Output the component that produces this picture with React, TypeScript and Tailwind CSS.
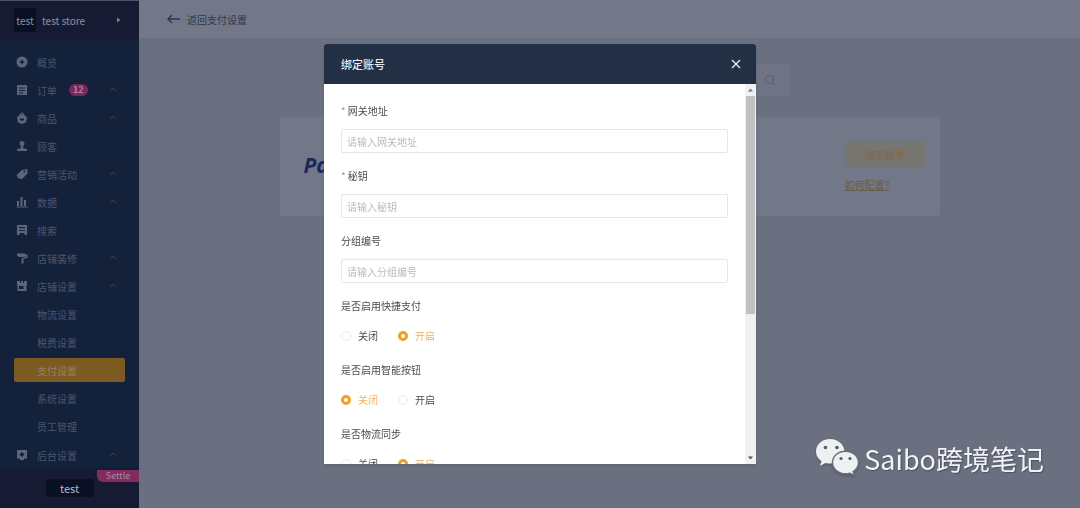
import { useState, type ReactNode } from "react";

const strokeProps = { fill: "none", stroke: "currentColor", strokeWidth: 2 };

const icons: Record<string, ReactNode> = {
  overview: <path fillRule="evenodd" d="M6 .5a5.500 5.500 0 1 0 0 11 5.500 5.500 0 0 0 0-11Zm0 2.700 .9 1.900 1.900.9-1.900.9L6 8.800l-.9-1.900L3.200 6l1.900-.9Z" />,
  order: <path fillRule="evenodd" d="M1 1h10v10H1ZM3 3.500v1h6v-1ZM3 6v1h6V6ZM3 8.500v1h4v-1Z" />,
  product: <path fillRule="evenodd" d="M4 2.500C4 .3 8 .3 8 2.500l3 3-1 5L6 12l-4-1.500-1-5ZM5 2.500h2C7 1.500 5 1.500 5 2.500ZM4 6v2l2 1 2-1V6L6 7Z" />,
  customer: <path d="M6 1a2.500 2.500 0 0 1 1.500 4.500L7 8l4 1.200V11H1V9.200L5 8l-.5-2.500A2.500 2.500 0 0 1 6 1Z" />,
  marketing: <path fillRule="evenodd" d="M.5 7 6 2l5.500-1v4.500L6 11 2.500 10.500ZM8.500 2.600a.9.9 0 1 0 0 1.800.9.9 0 0 0 0-1.800Z" />,
  data: <path d="M1 5h2v5H1Zm3.500-4h2v9h-2ZM8 4h2v6H8ZM.5 10.500h11v1H.5Z" />,
  search: <path fillRule="evenodd" d="M1 1h10v10H9L8 9H4l-1 2H1ZM3 3v1.200h6V3Zm0 3v1h6V6Z" />,
  design: <path d="M1 1.500h8v1h2.500v3.200L7.500 7v4.500h-2V6.500L9.800 5V4H9v1H3L1 3.500Z" />,
  store: <path fillRule="evenodd" d="M1 1h10v3.500l-.5 1V11h-9V5.500l-.5-1ZM3 6v3h4.500V6ZM4 1v2h1V1Zm3 0v2h1V1Z" />,
  admin: <path fillRule="evenodd" d="M1 1h10v8.500H8V11H4V9.500H1ZM6 3 3.500 5.500 6 8l2.500-2.500Z" />,
};

type Item = { icon: string; label: string; badge?: number; expandable?: boolean };

const items: Item[] = [
  { icon: "overview", label: "概览" },
  { icon: "order", label: "订单", badge: 12, expandable: true },
  { icon: "product", label: "商品", expandable: true },
  { icon: "customer", label: "顾客" },
  { icon: "marketing", label: "营销活动", expandable: true },
  { icon: "data", label: "数据", expandable: true },
  { icon: "search", label: "搜索" },
  { icon: "design", label: "店铺装修", expandable: true },
  { icon: "store", label: "店铺设置", expandable: true },
];

const subItems = ["物流设置", "税费设置", "支付设置", "系统设置", "员工管理"];

function NavRow({ icon, label, badge, expandable }: Item) {
  return (
    <a href="#" className="flex h-7 items-center pl-4 pr-[22px]">
      <svg viewBox="0 0 12 12" className="size-3 shrink-0 fill-[#5c657c]" aria-hidden="true">
        {icons[icon]}
      </svg>
      <span className="ml-[9px]">{label}</span>
      {badge && (
        <span className="ml-3 rounded-full bg-[#82245c] px-1 text-[9px] leading-[12px] font-bold text-[#a48aa8]">{badge}</span>
      )}
      {expandable && (
        <svg viewBox="0 0 8 8" className="ml-auto size-2 text-[#35425a]" aria-hidden="true">
          <path d="M1 4.500 4 2.500l3 2" {...strokeProps} strokeWidth={1} />
        </svg>
      )}
    </a>
  );
}

function Sidebar() {
  return (
    <aside className="flex w-[139px] shrink-0 flex-col border-t border-[#4d5268] bg-[#14213a] text-[10px] text-[#4a566e]">
      <div className="flex h-[38px] items-center bg-[#171a33] pl-[14px] pr-4 text-[#8d92a3]">
        <span className="flex h-6 w-[22px] items-center justify-center bg-[#0a1024]">test</span>
        <span className="ml-[6px]">test store</span>
        <svg viewBox="0 0 8 8" className="ml-auto size-2 fill-[#777d91]" aria-hidden="true">
          <path d="m2 1.500 3.500 2.500L2 6.500Z" />
        </svg>
      </div>
      <nav className="flex flex-col pt-[9px]">
        {items.map((item) => (
          <NavRow key={item.icon} {...item} />
        ))}
        {subItems.map((label) => (
          <a
            key={label}
            href="#"
            className={
              label === "支付设置"
                ? "mx-[14px] my-[2px] flex h-6 items-center rounded-[2px] bg-[#7b5b22] pl-[23px] text-[#978160]"
                : "flex h-7 items-center pl-[37px]"
            }
          >
            {label}
          </a>
        ))}
        <div className="flex h-7 flex-col pt-[2px]">
          <NavRow icon="admin" label="后台设置" expandable />
        </div>
      </nav>
      <div className="relative mt-auto flex h-10 items-center justify-center bg-[#171a33]">
        <button type="button" className="h-[18px] w-12 rounded-[2px] bg-[#0a1024] text-[11px] leading-[18px] text-[#b4b8c4]">
          test
        </button>
        <span className="absolute top-[2px] right-0 h-3 w-[42px] rounded-bl-md bg-[#822b5e] text-center text-[9px] leading-[12px] text-[#aa8ba9]">
          Settle
        </span>
      </div>
    </aside>
  );
}

function Page() {
  return (
    <div className="flex min-w-0 grow flex-col bg-[#6b7080]">
      <header className="flex h-[38px] items-center bg-[#737888] pl-7 text-[10px] text-[#30364a]">
        <a href="#" className="flex items-center gap-[7px]">
          <svg viewBox="0 0 13 10" className="h-[10px] w-[13px]" aria-hidden="true">
            <path d="M5 1 1 5l4 4M1 5h12" {...strokeProps} strokeWidth={1.300} />
          </svg>
          返回支付设置
        </a>
      </header>
      <main className="mx-auto w-full max-w-[660px] pt-[26px]">
        <div className="mr-[150px] ml-auto flex h-8 w-24 items-center justify-end bg-[#6f7485] pr-[14px]">
          <svg viewBox="0 0 12 12" className="size-3 text-[#5c6175]" aria-hidden="true">
            <path d="M8.500 8.500 11 11M5.500 1.500a4 4 0 1 1 0 8 4 4 0 0 1 0-8Z" {...strokeProps} strokeWidth={1.200} />
          </svg>
        </div>
        <section className="mt-[21px] flex h-[99px] items-center justify-between rounded-[3px] bg-[#737888] pr-[15px] pl-6">
          <span className="pb-1 font-['Open_Sans',sans-serif] text-[21px] leading-7 font-bold text-[#1b2859] italic">PayPal</span>
          <div className="flex w-20 flex-col items-start text-[10px] text-[#665e4b]">
            <button type="button" className="h-[26px] w-full rounded-[2px] bg-[#77756f] text-[#80684d]">
              绑定账号
            </button>
            <a href="#" className="mt-[10px] leading-[14px] underline">
              如何配置?
            </a>
          </div>
        </section>
      </main>
    </div>
  );
}

function TextField({ id, label, required }: { id: string; label: string; required?: boolean }) {
  return (
    <div className="mb-[13px] flex flex-col gap-2">
      <label htmlFor={id} className="leading-5">
        {required && <span className="mr-[2px] text-[#ad8f92]">*</span>}
        {label}
      </label>
      <input
        id={id}
        type="text"
        placeholder={`请输入${label}`}
        className="h-6 w-full rounded-[2px] border border-[#e6e6e8] px-[5px] outline-none placeholder:text-[#b9babf]"
      />
    </div>
  );
}

function RadioField({ name, label, initial }: { name: string; label: string; initial: string }) {
  const [value, setValue] = useState(initial);
  return (
    <fieldset className="mb-3">
      <legend className="leading-5">{label}</legend>
      <div className="mt-[7px] flex h-[25px] items-center gap-5">
        {["关闭", "开启"].map((option) => (
          <label key={option} className="flex items-center gap-[7px] leading-4 has-checked:text-[#f0b35a]">
            <input
              type="radio"
              name={name}
              checked={value === option}
              onChange={() => setValue(option)}
              className="size-[10px] appearance-none rounded-full border border-[#e9e9ec] bg-white checked:border-[3px] checked:border-[#f09f25]"
            />
            {option}
          </label>
        ))}
      </div>
    </fieldset>
  );
}

function BindDialog() {
  return (
    <div className="fixed inset-0 flex items-start justify-center pt-11 pb-11">
      <div role="dialog" aria-labelledby="dialog-title" className="flex h-full w-full max-w-[432px] flex-col overflow-hidden rounded-t-[2px] bg-white shadow-sm">
        <div className="flex h-10 shrink-0 items-center justify-between bg-[#222f45] pr-[15px] pl-[17px] text-[#e7eaf0]">
          <h2 id="dialog-title" className="text-[11px] font-medium">
            绑定账号
          </h2>
          <button type="button" aria-label="关闭">
            <svg viewBox="0 0 10 10" className="size-[10px]" aria-hidden="true">
              <path d="m1 1 8 8M9 1 1 9" {...strokeProps} strokeWidth={1.400} />
            </svg>
          </button>
        </div>
        <div className="flex min-h-0 grow">
          <form className="grow overflow-hidden px-[17px] pt-[17px] text-[10px] text-[#4b4c50]">
            <TextField id="gateway" label="网关地址" required />
            <TextField id="secret" label="秘钥" required />
            <TextField id="group" label="分组编号" />
            <RadioField name="express" label="是否启用快捷支付" initial="开启" />
            <RadioField name="smart" label="是否启用智能按钮" initial="关闭" />
            <RadioField name="logistics" label="是否物流同步" initial="开启" />
          </form>
          <div className="flex w-[11px] shrink-0 flex-col bg-[#f1f1f3]" aria-hidden="true">
            <svg viewBox="0 0 11 12" className="h-3 w-[11px] fill-[#77777c]">
              <path d="m3 7.500 2.500-3 2.500 3Z" />
            </svg>
            <div className="mx-px h-3/5 max-h-[218px] bg-[#c1c1c3]" />
            <svg viewBox="0 0 11 12" className="mt-auto h-3 w-[11px] fill-[#505055]">
              <path d="m3 4.500 2.500 3 2.500-3Z" />
            </svg>
          </div>
        </div>
      </div>
    </div>
  );
}

function Watermark() {
  return (
    <div className="fixed right-9 bottom-7 flex items-start gap-[5px] text-[#f2f3f5]">
      <svg viewBox="0 0 44 38" className="h-[38px] w-11 drop-shadow-[0_1px_1px_#4c5060]" aria-hidden="true">
        <path fill="#eef0f2" d="M15 1C7 1 1 6.500 1 13.500c0 4 2 7.500 5.500 9.700L5 28l5.500-3c1.500.5 3 .6 4.500.6 8 0 14.500-5.400 14.500-12.100S23 1 15 1Z" />
        <path fill="#eef0f2" stroke="#6b7080" strokeWidth="1.500" d="M30.500 13.200c-7.300 0-13 5-13 11.300s5.700 11.300 13 11.300c1.500 0 3-.2 4.300-.6l4.700 2.300-1.300-4c3.400-2.100 5.300-5.300 5.300-9 0-6.300-5.700-11.300-13-11.300Z" />
        <g fill="#555b6b">
          <circle cx="10.500" cy="9.500" r="1.800" />
          <circle cx="22" cy="9.500" r="1.800" />
          <circle cx="26" cy="20.500" r="1.600" />
          <circle cx="35" cy="20.500" r="1.600" />
        </g>
      </svg>
      <span className="text-[27px] leading-[42px] text-shadow-[1px_1px_1px_#4c5060]">Saibo跨境笔记</span>
    </div>
  );
}

export default function App() {
  return (
    <div className="flex min-h-screen font-['Noto_Sans_CJK_SC',sans-serif]">
      <Sidebar />
      <Page />
      <BindDialog />
      <Watermark />
    </div>
  );
}
